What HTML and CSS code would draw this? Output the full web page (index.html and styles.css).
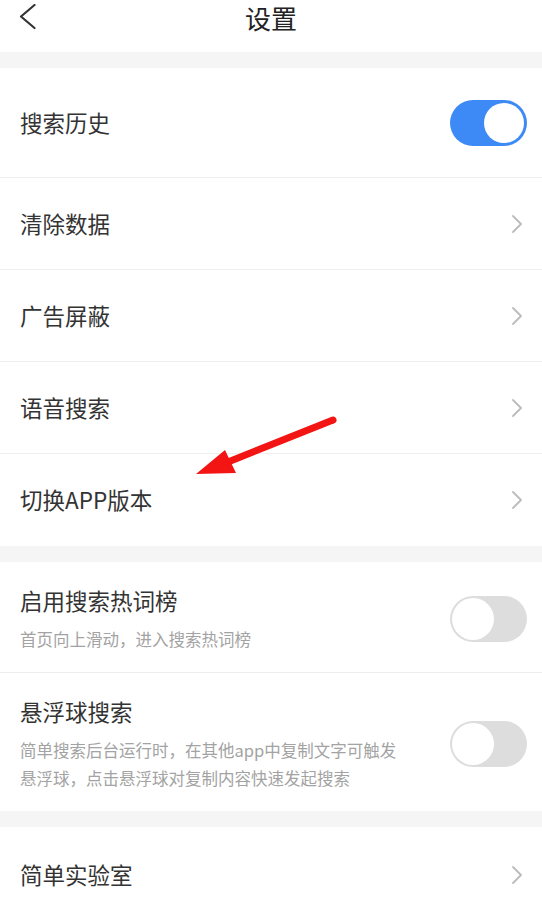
FILE: index.html
```html
<!DOCTYPE html>
<html lang="zh-CN">
<head>
<meta charset="utf-8">
<title>设置</title>
<link rel="stylesheet" href="styles.css">
</head>
<body>
<div class="page">
  <header class="topbar">
    <div class="back">
      <svg width="18" height="26" viewBox="0 0 18 26"><polyline points="15.5,1 2,12.5 15.5,24" fill="none" stroke="#333" stroke-width="2.2" stroke-linecap="round" stroke-linejoin="round"/></svg>
    </div>
    <h1 class="title">设置</h1>
    <div></div>
  </header>

  <section class="group">
    <div class="row row-tall">
      <span class="label">搜索历史</span>
      <span class="switch on"><span class="knob"></span></span>
    </div>
    <div class="row">
      <span class="label">清除数据</span>
      <svg class="chev" width="12" height="20" viewBox="0 0 12 20"><polyline points="2,2 10,10 2,18" fill="none" stroke="#bbb" stroke-width="1.8" stroke-linecap="round" stroke-linejoin="round"/></svg>
    </div>
    <div class="row">
      <span class="label">广告屏蔽</span>
      <svg class="chev" width="12" height="20" viewBox="0 0 12 20"><polyline points="2,2 10,10 2,18" fill="none" stroke="#bbb" stroke-width="1.8" stroke-linecap="round" stroke-linejoin="round"/></svg>
    </div>
    <div class="row">
      <span class="label">语音搜索</span>
      <svg class="chev" width="12" height="20" viewBox="0 0 12 20"><polyline points="2,2 10,10 2,18" fill="none" stroke="#bbb" stroke-width="1.8" stroke-linecap="round" stroke-linejoin="round"/></svg>
    </div>
    <div class="row">
      <span class="label">切换APP版本</span>
      <svg class="chev" width="12" height="20" viewBox="0 0 12 20"><polyline points="2,2 10,10 2,18" fill="none" stroke="#bbb" stroke-width="1.8" stroke-linecap="round" stroke-linejoin="round"/></svg>
    </div>
  </section>

  <section class="group">
    <div class="row row-desc">
      <div class="text">
        <div class="label">启用搜索热词榜</div>
        <div class="desc">首页向上滑动，进入搜索热词榜</div>
      </div>
      <span class="switch"><span class="knob"></span></span>
    </div>
    <div class="row row-desc">
      <div class="text">
        <div class="label">悬浮球搜索</div>
        <div class="desc">简单搜索后台运行时，在其他app中复制文字可触发悬浮球，点击悬浮球对复制内容快速发起搜索</div>
      </div>
      <span class="switch"><span class="knob"></span></span>
    </div>
  </section>

  <section class="group">
    <div class="row row-lab">
      <span class="label">简单实验室</span>
      <svg class="chev" width="12" height="20" viewBox="0 0 12 20"><polyline points="2,2 10,10 2,18" fill="none" stroke="#bbb" stroke-width="1.8" stroke-linecap="round" stroke-linejoin="round"/></svg>
    </div>
  </section>

  <svg class="annot" width="542" height="910" viewBox="0 0 542 910">
    <line x1="333" y1="420" x2="228" y2="462" stroke="#f31414" stroke-width="7" stroke-linecap="round"/>
    <polygon points="196,474 225,450 236,473" fill="#f31414"/>
  </svg>
</div>
</body>
</html>
```

FILE: styles.css
```css
html, body {
  margin: 0;
  padding: 0;
}
body {
  background: #f5f5f5;
  font-family: "Noto Sans CJK SC", "Noto Sans", sans-serif;
  width: 542px;
  overflow: hidden;
}
.page {
  position: relative;
  height: 910px;
  overflow: hidden;
}
.topbar {
  height: 52px;
  background: #fff;
  display: grid;
  grid-template-columns: 1fr auto 1fr;
  align-items: start;
}
.back {
  padding: 4px 0 0 19px;
  line-height: 0;
}
.title {
  margin: 0;
  font-size: 26px;
  font-weight: 400;
  line-height: 35px;
  color: #222;
}
.group {
  background: #fff;
  margin-top: 16px;
}
.row {
  box-sizing: border-box;
  height: 92px;
  display: flex;
  align-items: center;
  justify-content: space-between;
  padding: 0 15px 0 20px;
  border-bottom: 1px solid #eeeeee;
}
.row:last-child {
  border-bottom: none;
}
.row-tall {
  height: 110px;
}
.row-lab {
  height: 96px;
}
.label {
  font-size: 22.5px;
  line-height: 30px;
  color: #333;
  padding-bottom: 2px;
}
.chev {
  margin-right: 4px;
}
.row-desc {
  height: auto;
  padding-top: 23px;
  padding-bottom: 19px;
}
.row-desc .label {
  padding-bottom: 0;
}
.text {
  max-width: 392px;
}
.desc {
  margin-top: 10px;
  font-size: 16.5px;
  line-height: 28px;
  color: #a3a3a3;
}
.switch {
  box-sizing: border-box;
  width: 77px;
  height: 46px;
  border-radius: 23px;
  background: #dddddd;
  display: flex;
  align-items: center;
  padding: 2px;
  flex-shrink: 0;
}
.knob {
  width: 42px;
  height: 42px;
  border-radius: 50%;
  background: #fff;
}
.switch.on {
  background: #3d8af7;
  justify-content: flex-end;
  padding: 3px;
}
.switch.on .knob {
  width: 40px;
  height: 40px;
}
.annot {
  position: absolute;
  left: 0;
  top: 0;
  pointer-events: none;
}
```
